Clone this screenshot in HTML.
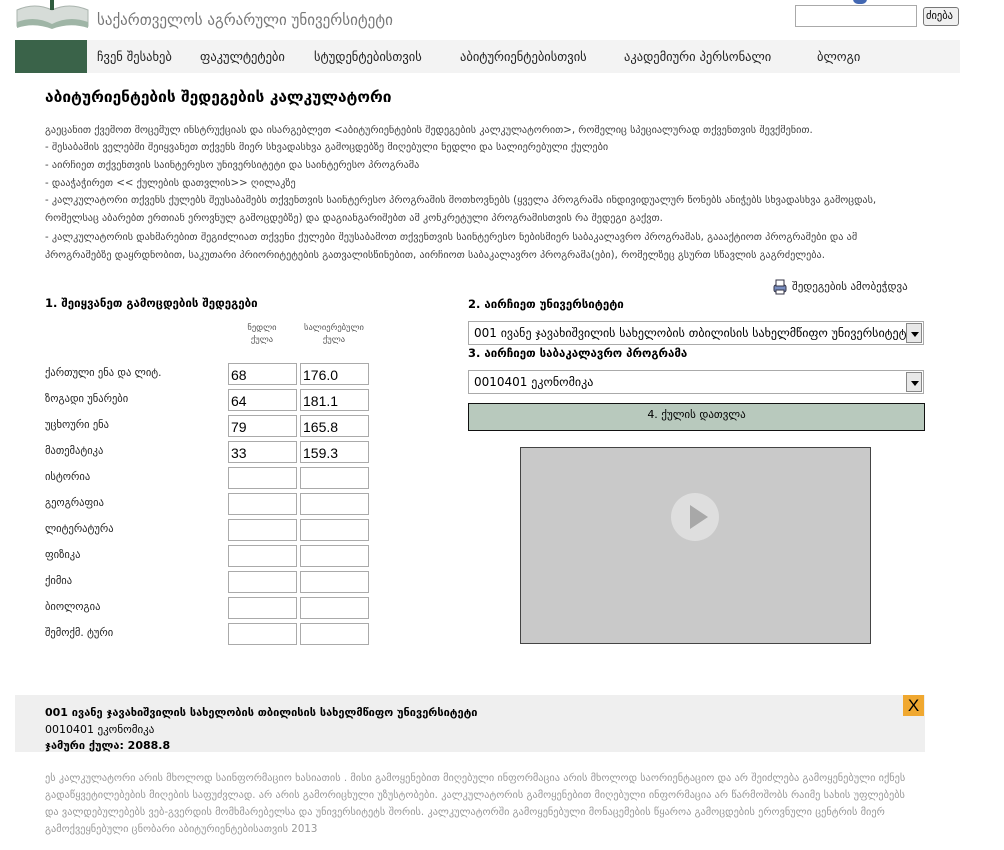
<!DOCTYPE html>
<html><head><meta charset="utf-8">
<style>
*{margin:0;padding:0;box-sizing:border-box}
body{width:1004px;height:850px;background:#fff;font-family:"DejaVu Sans","Liberation Sans",sans-serif;position:relative;overflow:hidden;color:#000}
.a{position:absolute;white-space:nowrap}
.nav{position:absolute;left:15px;top:40px;width:945px;height:33px;background:#f3f3f3}
.nav .g{position:absolute;left:0;top:0;width:72px;height:33px;background:#3a6349}
.nav span{position:absolute;top:9px;font-size:12.5px;color:#222}
.intro{position:absolute;left:45px;font-size:10.2px;color:#444;white-space:nowrap;overflow:hidden;width:880px}
.lbl{position:absolute;left:45px;font-size:10.5px;color:#222;white-space:nowrap}
.in{position:absolute;width:69px;height:22px;border:1px solid #aaa;font-family:"Liberation Sans",sans-serif;font-size:14px;padding:3px 2px;color:#000}
.sel{position:absolute;left:468px;width:456px;height:24px;border:1px solid #aaa;background:#fff;font-size:12px;padding:4px 5px;white-space:nowrap;overflow:hidden}
.sel b{position:absolute;right:1px;top:1px;width:16px;height:20px;background:#e8e8e8;border:1px solid #888}
.sel b:after{content:"";position:absolute;left:4px;top:8px;border-left:4px solid transparent;border-right:4px solid transparent;border-top:5px solid #000}
.h{position:absolute;font-size:11.5px;font-weight:bold;white-space:nowrap}
.disc{position:absolute;left:45px;font-size:10.3px;color:#999;white-space:nowrap;overflow:hidden;width:880px}
</style></head><body>
<svg class="a" style="left:15px;top:0" width="75" height="30" viewBox="0 0 75 30">
<path d="M2 10 Q20 2 37 10 Q54 2 73 10 L73 26 Q55 19 37 27 Q19 19 2 26 Z" fill="#d6dcd8" stroke="#aab4ae"/>
<path d="M2 22 Q20 15 37 24 Q54 15 73 22 L73 28 Q55 22 37 29 Q19 22 2 28Z" fill="#9fb5a6"/>
<rect x="35" y="0" width="4" height="10" fill="#2f5d3e"/>
</svg>
<div class="a" style="left:97px;top:11px;font-size:15px;color:#777">საქართველოს აგრარული უნივერსიტეტი</div>
<div class="a" style="left:853px;top:-6px;width:14px;height:10px;border-radius:7px;background:#4267b2"></div>
<div class="a" style="left:795px;top:5px;width:122px;height:22px;border:1px solid #aaa"></div>
<div class="a" style="left:923px;top:7px;width:36px;height:19px;border:1px solid #777;border-radius:3px;background:#f0f0f0;font-size:10.5px;padding:2px 2px">ძიება</div>
<div class="nav"><div class="g"></div>
<span style="left:82px">ჩვენ შესახებ</span><span style="left:185px">ფაკულტეტები</span><span style="left:299px">სტუდენტებისთვის</span><span style="left:445px">აბიტურიენტებისთვის</span><span style="left:609px">აკადემიური პერსონალი</span><span style="left:802px">ბლოგი</span></div>
<div class="a" style="left:45px;top:88px;font-size:15.5px;font-weight:bold">აბიტურიენტების შედეგების კალკულატორი</div>
<div class="intro" style="top:125px">გაეცანით ქვემოთ მოცემულ ინსტრუქციას და ისარგებლეთ &lt;აბიტურიენტების შედეგების კალკულატორით&gt;, რომელიც სპეციალურად თქვენთვის შევქმენით.</div>
<div class="intro" style="top:142px">- შესაბამის ველებში შეიყვანეთ თქვენს მიერ სხვადასხვა გამოცდებზე მიღებული ნედლი და სალიერებული ქულები</div>
<div class="intro" style="top:160px">- აირჩიეთ თქვენთვის საინტერესო უნივერსიტეტი და საინტერესო პროგრამა</div>
<div class="intro" style="top:178px">- დააჭაჭირეთ &lt;&lt; ქულების დათვლის&gt;&gt; ღილაკზე</div>
<div class="intro" style="top:195px">- კალკულატორი თქვენს ქულებს შეუსაბამებს თქვენთვის საინტერესო პროგრამის მოთხოვნებს (ყველა პროგრამა ინდივიდუალურ წონებს ანიჭებს სხვადასხვა გამოცდას,</div>
<div class="intro" style="top:213px">რომელსაც აბარებთ ერთიან ეროვნულ გამოცდებზე) და დაგიანგარიშებთ ამ კონკრეტული პროგრამისთვის რა შედეგი გაქვთ.</div>
<div class="intro" style="top:232px">- კალკულატორის დახმარებით შეგიძლიათ თქვენი ქულები შეუსაბამოთ თქვენთვის საინტერესო ნებისმიერ საბაკალავრო პროგრამას, გაააქტიოთ პროგრამები და ამ</div>
<div class="intro" style="top:250px">პროგრამებზე დაყრდნობით, საკუთარი პრიორიტეტების გათვალისწინებით, აირჩიოთ საბაკალავრო პროგრამა(ები), რომელზეც გსურთ სწავლის გაგრძელება.</div>

<div class="h" style="left:45px;top:296px">1. შეიყვანეთ გამოცდების შედეგები</div>
<div class="a" style="left:232px;top:322px;width:60px;text-align:center;font-size:8.5px;color:#555;line-height:12px">ნედლი<br>ქულა</div>
<div class="a" style="left:296px;top:322px;width:76px;text-align:center;font-size:8.5px;color:#555;line-height:12px">სალიერებული<br>ქულა</div>

<div class="lbl" style="top:367px">ქართული ენა და ლიტ.</div><div class="in" style="left:228px;top:363px">68</div><div class="in" style="left:300px;top:363px">176.0</div>
<div class="lbl" style="top:393px">ზოგადი უნარები</div><div class="in" style="left:228px;top:389px">64</div><div class="in" style="left:300px;top:389px">181.1</div>
<div class="lbl" style="top:419px">უცხოური ენა</div><div class="in" style="left:228px;top:415px">79</div><div class="in" style="left:300px;top:415px">165.8</div>
<div class="lbl" style="top:445px">მათემატიკა</div><div class="in" style="left:228px;top:441px">33</div><div class="in" style="left:300px;top:441px">159.3</div>
<div class="lbl" style="top:471px">ისტორია</div><div class="in" style="left:228px;top:467px"></div><div class="in" style="left:300px;top:467px"></div>
<div class="lbl" style="top:497px">გეოგრაფია</div><div class="in" style="left:228px;top:493px"></div><div class="in" style="left:300px;top:493px"></div>
<div class="lbl" style="top:523px">ლიტერატურა</div><div class="in" style="left:228px;top:519px"></div><div class="in" style="left:300px;top:519px"></div>
<div class="lbl" style="top:549px">ფიზიკა</div><div class="in" style="left:228px;top:545px"></div><div class="in" style="left:300px;top:545px"></div>
<div class="lbl" style="top:575px">ქიმია</div><div class="in" style="left:228px;top:571px"></div><div class="in" style="left:300px;top:571px"></div>
<div class="lbl" style="top:601px">ბიოლოგია</div><div class="in" style="left:228px;top:597px"></div><div class="in" style="left:300px;top:597px"></div>
<div class="lbl" style="top:627px">შემოქმ. ტური</div><div class="in" style="left:228px;top:623px"></div><div class="in" style="left:300px;top:623px"></div>

<svg class="a" style="left:772px;top:279px" width="16" height="16" viewBox="0 0 16 16"><rect x="2" y="6" width="12" height="7" rx="2" fill="#7a8fc2" stroke="#334"/><rect x="4" y="1" width="8" height="6" fill="#fff" stroke="#334"/><rect x="4" y="11" width="8" height="4" fill="#fff" stroke="#334"/></svg>
<div class="a" style="left:792px;top:280px;font-size:11px;color:#222">შედეგების ამობეჭდვა</div>
<div class="h" style="left:468px;top:297px">2. აირჩიეთ უნივერსიტეტი</div>
<div class="sel" style="top:321px">001 ივანე ჯავახიშვილის სახელობის თბილისის სახელმწიფო უნივერსიტეტი<b></b></div>
<div class="h" style="left:468px;top:346px">3. აირჩიეთ საბაკალავრო პროგრამა</div>
<div class="sel" style="top:370px">0010401 ეკონომიკა<b></b></div>
<div class="a" style="left:468px;top:403px;width:457px;height:28px;background:#b8c9bd;border:1px solid #111;text-align:center;font-size:11px;padding-top:4px">4. ქულის დათვლა</div>
<div class="a" style="left:520px;top:447px;width:351px;height:197px;background:#c9c9c9;border:1px solid #444"></div>
<div class="a" style="left:671px;top:493px;width:48px;height:48px;border-radius:24px;background:#e0e0e0;opacity:.9"></div>
<div class="a" style="left:690px;top:505px;width:0;height:0;border-top:12px solid transparent;border-bottom:12px solid transparent;border-left:18px solid #a8a8a8"></div>

<div class="a" style="left:15px;top:695px;width:910px;height:57px;background:#efefef"></div>
<div class="a" style="left:903px;top:695px;width:21px;height:21px;background:#f0a830;font-size:17px;text-align:center;line-height:21px;font-family:'Liberation Sans',sans-serif">X</div>
<div class="a" style="left:45px;top:706px;font-size:11px;font-weight:bold">001 ივანე ჯავახიშვილის სახელობის თბილისის სახელმწიფო უნივერსიტეტი</div>
<div class="a" style="left:45px;top:723px;font-size:11px">0010401 ეკონომიკა</div>
<div class="a" style="left:45px;top:739px;font-size:11px;font-weight:bold">ჯამური ქულა: 2088.8</div>

<div class="disc" style="top:772px">ეს კალკულატორი არის მხოლოდ საინფორმაციო ხასიათის . მისი გამოყენებით მიღებული ინფორმაცია არის მხოლოდ საორიენტაციო და არ შეიძლება გამოყენებული იქნეს</div>
<div class="disc" style="top:789px">გადაწყვეტილებების მიღების საფუძვლად. არ არის გამორიცხული უზუსტობები. კალკულატორის გამოყენებით მიღებული ინფორმაცია არ წარმოშობს რაიმე სახის უფლებებს</div>
<div class="disc" style="top:806px">და ვალდებულებებს ვებ-გვერდის მომხმარებელსა და უნივერსიტეტს შორის. კალკულატორში გამოყენებული მონაცემების წყაროა გამოცდების ეროვნული ცენტრის მიერ</div>
<div class="disc" style="top:823px">გამოქვეყნებული ცნობარი აბიტურიენტებისათვის 2013</div>
</body></html>
